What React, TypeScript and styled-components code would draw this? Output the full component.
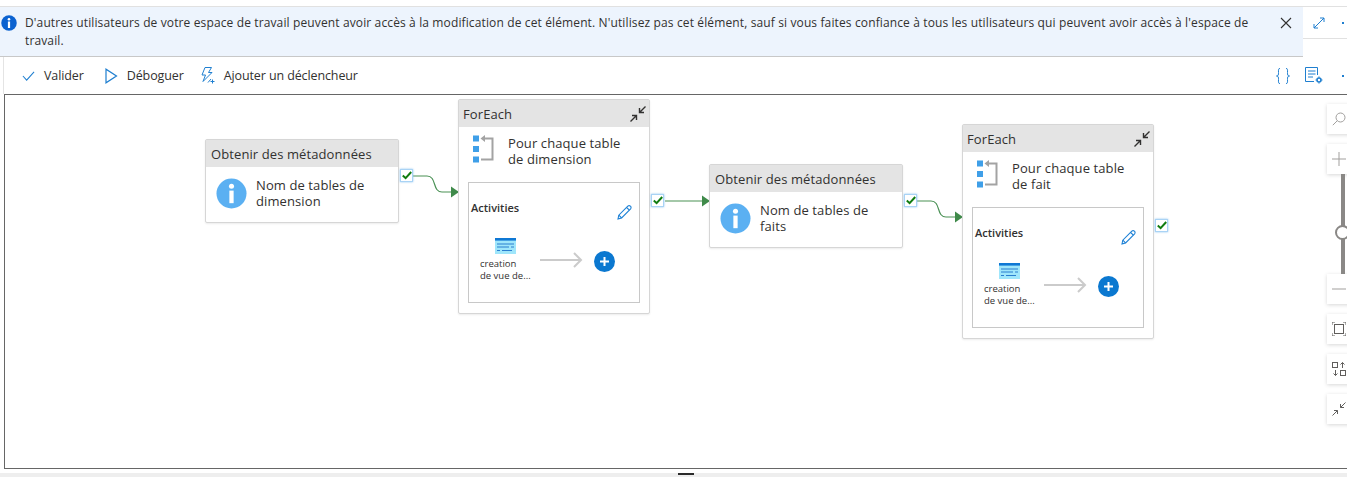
import styled, { createGlobalStyle } from "styled-components";

const GlobalStyle = createGlobalStyle`
  html, body {
    margin: 0;
    padding: 0;
    height: 100%;
    overflow: hidden;
    background: #fff;
    font-family: "Open Sans", "Noto Sans", "Liberation Sans", sans-serif;
    color: #323130;
  }
`;

interface NodeProps {
  $x: number;
  $y: number;
}

const InfoGlyph = ({ size, fill }: { size: number; fill: string }) => (
  <svg width={size} height={size} viewBox="0 0 32 32">
    <circle cx="16" cy="16" r="15.5" fill={fill} />
    <circle cx="16" cy="8.5" r="2.6" fill="#fff" />
    <rect x="13.8" y="13" width="4.4" height="13" fill="#fff" />
  </svg>
);

const CollapseIcon = () => (
  <svg width="18" height="18" viewBox="0 0 18 18" fill="none" stroke="#323130" strokeWidth="1.4">
    <path d="M1.5 16.5 7.5 10.5M3 10.5H7.5V15" />
    <path d="M16.5 1.5 10.5 7.5M15 7.5H10.5V3" />
  </svg>
);

const ForEachIcon = () => (
  <svg width="24" height="28" viewBox="0 0 24 28">
    <rect x="0" y="0.5" width="6" height="6" fill="#3f9fe8" />
    <rect x="0" y="11" width="6" height="6" fill="#3f9fe8" />
    <rect x="0" y="21.5" width="6" height="6" fill="#3f9fe8" />
    <path d="M10 3.5H19.5V24.500H8" fill="none" stroke="#a3a3a3" strokeWidth="2" />
    <path d="M12 0V7L7.5 3.5Z" fill="#a3a3a3" />
  </svg>
);

const PencilIcon = () => (
  <svg width="15" height="15" viewBox="0 0 15 15" fill="none" stroke="#1f82d6" strokeWidth="1.1">
    <path d="M1 14 1.8 10.2 10.8 1.2C11.6.5 12.6.5 13.4 1.2 14.2 2 14.2 3 13.6 3.8L4.6 12.9Z" />
    <path d="M9.6 2.5 12.4 5.2M1.8 10.2 4.6 12.9" />
  </svg>
);

const ViewIcon = () => (
  <svg width="21" height="16" viewBox="0 0 21 16">
    <rect width="21" height="16" fill="#9fe6fb" />
    <rect width="21" height="2.6" fill="#0f78d4" />
    <path d="M2 6H19M2 9H14M16 9H19M2 12.5H5M7 12.5H17" stroke="#2a7fd0" strokeWidth="1.2" />
  </svg>
);

const RunArrow = () => (
  <svg width="44" height="16" viewBox="0 0 44 16" fill="none" stroke="#cbcbcb" strokeWidth="2">
    <path d="M1 8H42M35 1 42 8 35 15" />
  </svg>
);

const Canvas = styled.main`
  position: relative;
  flex: 1;
  margin-left: 4px;
  border-top: 1px solid #666;
  border-left: 1px solid #666;
  border-bottom: 1px solid #666;
  overflow: hidden;
`;

const Page = styled.div`
  display: flex;
  flex-direction: column;
  width: 1347px;
  height: 477px;
  padding-top: 6px;
  box-sizing: border-box;
  overflow: hidden;
`;

const TopRow = styled.div`
  display: flex;
  height: 51px;
  flex: none;
  border-top: 1px solid #e1e1e1;
  box-sizing: border-box;
`;

const Banner = styled.div`
  display: flex;
  width: 1303px;
  box-sizing: border-box;
  background: #edf4fd;
  border-bottom: 1px solid #c8c8c8;
`;

const BannerIcon = styled.div`
  flex: none;
  width: 25px;
  padding: 7px 0 0 1px;
  box-sizing: border-box;
`;

const BannerText = styled.p`
  margin: 7px 0 0;
  width: 1240px;
  font-size: 12px;
  line-height: 18px;
  letter-spacing: 0.127px;
`;

const CloseButton = styled.button`
  border: 0;
  background: none;
  padding: 0;
  margin: 10px 0 0 15px;
  width: 12px;
  height: 12px;
  display: flex;
`;

const SidePane = styled.div`
  flex: 1;
  height: 32px;
  display: flex;
  align-items: center;
  justify-content: space-between;
  padding: 0 3px 0 10px;
  border-bottom: 1px solid #e1e1e1;
  box-sizing: border-box;
`;

const BlueDot = styled.span`
  width: 2px;
  height: 2px;
  background: #1f7fd0;
`;

const Toolbar = styled.div`
  display: flex;
  align-items: center;
  height: 37px;
  flex: none;
  margin-left: 3px;
  padding-left: 18px;
  border-left: 1px solid #e4e4e4;
  box-sizing: border-box;
`;

const ToolButton = styled.button<{ $after: number }>`
  display: flex;
  align-items: center;
  gap: 9px;
  border: 0;
  background: none;
  padding: 0;
  margin-right: ${(p) => p.$after}px;
  font: inherit;
  font-size: 12.5px;
  letter-spacing: -0.11px;
  color: #323130;
`;

const ToolRight = styled.div`
  margin-left: auto;
  display: flex;
  align-items: center;
  gap: 15px;
  padding-right: 3px;
`;

const ToolDot = styled(BlueDot)`
  margin-left: 4px;
`;

const Activity = styled.div<NodeProps>`
  position: absolute;
  left: ${(p) => p.$x}px;
  top: ${(p) => p.$y}px;
  width: 194px;
  height: 84px;
  box-sizing: border-box;
  background: #fff;
  border: 1px solid #d6d6d6;
  border-radius: 2px;
  box-shadow: 0 1px 2px rgba(0, 0, 0, 0.08);
`;

const NodeHeader = styled.div<{ $inset: number }>`
  display: flex;
  align-items: center;
  justify-content: space-between;
  height: 27px;
  padding: 0 2px 0 ${(p) => p.$inset}px;
  box-sizing: border-box;
  background: #e4e4e4;
  font-size: 13px;
  letter-spacing: 0.1px;
`;

const ActivityBody = styled.div`
  display: flex;
  align-items: center;
  gap: 9px;
  padding: 10px 10px 0 10px;
`;

const NodeLabel = styled.div`
  font-size: 13px;
  line-height: 16px;
  letter-spacing: 0.1px;
  color: #323130;
`;

const Container = styled.div<NodeProps>`
  position: absolute;
  left: ${(p) => p.$x}px;
  top: ${(p) => p.$y}px;
  width: 192px;
  height: 215px;
  box-sizing: border-box;
  background: #fff;
  border: 1px solid #d6d6d6;
  border-radius: 2px;
  box-shadow: 0 1px 2px rgba(0, 0, 0, 0.08);
`;

const ContainerTitle = styled.div`
  display: flex;
  align-items: flex-start;
  gap: 11px;
  height: 55px;
  padding: 8px 0 0 14px;
  box-sizing: border-box;
`;

const InnerBox = styled.div`
  margin: 0 9px;
  height: 121px;
  box-sizing: border-box;
  border: 1px solid #c8c8c8;
  padding: 17px 2px 0;
`;

const InnerHeader = styled.div`
  display: flex;
  justify-content: space-between;
  align-items: flex-start;
  padding-right: 5px;
  font-size: 11px;
  font-weight: 600;
  letter-spacing: 0;
  line-height: 16px;
`;

const PencilSlot = styled.span`
  margin-top: 5px;
`;

const InnerRow = styled.div`
  display: flex;
  margin-top: 14px;
`;

const InnerActivity = styled.div`
  width: 68px;
  padding-left: 9px;
  box-sizing: border-box;
  font-size: 9.5px;
  line-height: 12px;
`;

const ViewSlot = styled.div`
  display: flex;
  padding: 0 0 4px 15px;
`;

const ArrowSlot = styled.div`
  display: flex;
  align-items: center;
  margin-top: 7px;
  height: 30px;
`;

const AddButton = styled.button`
  position: relative;
  flex: none;
  width: 21px;
  height: 21px;
  margin: 13px 0 0 11px;
  padding: 0;
  border: 0;
  border-radius: 50%;
  background: #0b78d0;
  display: flex;
  align-items: center;
  justify-content: center;
`;

const CheckBadge = styled.div<NodeProps>`
  position: absolute;
  left: ${(p) => p.$x}px;
  top: ${(p) => p.$y}px;
  width: 13px;
  height: 13px;
  box-sizing: border-box;
  background: #fff;
  border: 1px solid #a9d3f5;
  box-shadow: 0 0 2px #8cc4f0;
  display: flex;
  align-items: center;
  justify-content: center;
`;

const Links = styled.svg`
  position: absolute;
  left: 0;
  top: 0;
  pointer-events: none;
`;

const ZoomPanel = styled.div`
  position: absolute;
  left: 1322px;
  top: 9px;
  width: 40px;
  display: flex;
  flex-direction: column;
`;

const ZoomButton = styled.div<{ $gap?: number }>`
  flex: none;
  height: 30px;
  margin-top: ${(p) => p.$gap ?? 0}px;
  padding-left: 5px;
  display: flex;
  align-items: center;
  background: #fff;
  box-shadow: 0 1px 4px rgba(0, 0, 0, 0.16);
`;

const SliderTrack = styled.div`
  position: relative;
  flex: none;
  height: 100px;
  width: 4px;
  margin-left: 14px;
  background: #8a8886;
`;

const SliderThumb = styled.div`
  position: absolute;
  left: -6px;
  top: 51px;
  width: 15px;
  height: 15px;
  box-sizing: border-box;
  border: 2px solid #8a8886;
  border-radius: 50%;
  background: #fff;
`;

const BottomStrip = styled.div`
  flex: none;
  height: 4px;
  margin-top: 4px;
  background: #eee;
  display: flex;
  justify-content: center;
`;

const Handle = styled.div`
  width: 16px;
  height: 2px;
  margin-left: 25px;
  background: #2b2b2b;
`;

const Check = () => (
  <svg width="10" height="9" viewBox="0 0 10 9" fill="none" stroke="#107c10" strokeWidth="2">
    <path d="M.8 4.6 3.6 7.2 9.2 1" />
  </svg>
);

const ActivityNode = ({ x, y, label }: { x: number; y: number; label: string[] }) => (
  <Activity $x={x} $y={y}>
    <NodeHeader $inset={5}>Obtenir des métadonnées</NodeHeader>
    <ActivityBody>
      <InfoGlyph size={31} fill="#5bb0f2" />
      <NodeLabel>
        {label[0]}
        <br />
        {label[1]}
      </NodeLabel>
    </ActivityBody>
  </Activity>
);

const ForEachNode = ({ x, y, label }: { x: number; y: number; label: string[] }) => (
  <Container $x={x} $y={y}>
    <NodeHeader $inset={4}>
      ForEach
      <CollapseIcon />
    </NodeHeader>
    <ContainerTitle>
      <ForEachIcon />
      <NodeLabel>
        {label[0]}
        <br />
        {label[1]}
      </NodeLabel>
    </ContainerTitle>
    <InnerBox>
      <InnerHeader>
        Activities
        <PencilSlot>
          <PencilIcon />
        </PencilSlot>
      </InnerHeader>
      <InnerRow>
        <InnerActivity>
          <ViewSlot>
            <ViewIcon />
          </ViewSlot>
          creation
          <br />
          de vue de...
        </InnerActivity>
        <ArrowSlot>
          <RunArrow />
        </ArrowSlot>
        <AddButton>
          <svg width="9" height="9" viewBox="0 0 9 9" stroke="#fff" strokeWidth="2">
            <path d="M4.5 0V9M0 4.5H9" />
          </svg>
        </AddButton>
      </InnerRow>
    </InnerBox>
  </Container>
);

export default function App() {
  return (
    <Page>
      <GlobalStyle />
      <TopRow>
        <Banner>
          <BannerIcon>
            <InfoGlyph size={16} fill="#0b62d0" />
          </BannerIcon>
          <BannerText>
            D'autres utilisateurs de votre espace de travail peuvent avoir accès à la modification de cet élément. N'utilisez pas cet élément, sauf si vous faites confiance à tous les utilisateurs qui peuvent avoir accès à l'espace de travail.
          </BannerText>
          <CloseButton aria-label="Fermer">
            <svg width="12" height="12" viewBox="0 0 12 12" stroke="#323130" strokeWidth="1.1">
              <path d="M1 1 11 11M11 1 1 11" />
            </svg>
          </CloseButton>
        </Banner>
        <SidePane>
          <svg width="12" height="12" viewBox="0 0 12 12" fill="none" stroke="#1f7fd0" strokeWidth="1">
            <path d="M1 11 11 1M1 7V11H5M7 1H11V5" />
          </svg>
          <BlueDot />
        </SidePane>
      </TopRow>
      <Toolbar>
        <ToolButton $after={20}>
          <svg width="13" height="12" viewBox="0 0 14 12" fill="none" stroke="#1f7fd0" strokeWidth="1.1">
            <path d="M1 6 5 10.5 13 1.5" />
          </svg>
          Valider
        </ToolButton>
        <ToolButton $after={15}>
          <svg width="14" height="16" viewBox="0 0 14 16" fill="none" stroke="#1f7fd0" strokeWidth="1.2">
            <path d="M2 1.2V14.8L12.5 8Z" />
          </svg>
          Déboguer
        </ToolButton>
        <ToolButton $after={0}>
          <svg width="16" height="17" viewBox="0 0 16 17" fill="none" stroke="#1f7fd0" strokeWidth="1">
            <path d="M6 .5H12.500L9.500 5.500H13L4 14.500 6.500 8H3Z" />
            <path d="M9 15.500 12 12M13.500 12.500V16.500M11.500 14.500H15.500" />
          </svg>
          Ajouter un déclencheur
        </ToolButton>
        <ToolRight>
          <svg width="14" height="16" viewBox="0 0 14 16" fill="none" stroke="#1f7fd0" strokeWidth="1">
            <path d="M4 .5C2 .5 2.500 2 2.500 4.500 2.500 6.500 2.500 8 .5 8 2.500 8 2.500 9.500 2.500 11.500 2.500 14 2 15.500 4 15.500" />
            <path d="M10 .5C12 .5 11.500 2 11.500 4.500 11.500 6.500 11.500 8 13.500 8 11.500 8 11.500 9.500 11.500 11.500 11.500 14 12 15.500 10 15.500" />
          </svg>
          <svg width="18" height="17" viewBox="0 0 18 17" fill="none" stroke="#1f7fd0" strokeWidth="1">
            <path d="M9 14.500H.5V.5H12.500V8" />
            <path d="M3 4H10.500M3 7H10.500M3 10H8" />
            <circle cx="14" cy="13" r="2" strokeWidth="1.6" />
            <path d="M14 9.500V10.500M14 15.500V16.500M10.500 13H11.500M16.500 13H17.500" strokeWidth="1.2" />
          </svg>
          <ToolDot />
        </ToolRight>
      </Toolbar>
      <Canvas>
        <Links width="1342" height="373" fill="none">
          <path d="M408 81H422C432 81 427 97 437 97H446" stroke="#4a9155" strokeWidth="1.2" />
          <path d="M446 91.500 454 97 446 102.500Z" fill="#3f8a4a" />
          <path d="M660 106H697" stroke="#4a9155" strokeWidth="1.2" />
          <path d="M697 100.500 705 106 697 111.500Z" fill="#3f8a4a" />
          <path d="M912 106H926C936 106 931 122 941 122H950" stroke="#4a9155" strokeWidth="1.2" />
          <path d="M950 116.500 958 122 950 127.500Z" fill="#3f8a4a" />
        </Links>
        <ActivityNode x={200} y={44} label={["Nom de tables de", "dimension"]} />
        <CheckBadge $x={395} $y={74}>
          <Check />
        </CheckBadge>
        <ForEachNode x={453} y={4} label={["Pour chaque table", "de dimension"]} />
        <CheckBadge $x={646} $y={99}>
          <Check />
        </CheckBadge>
        <ActivityNode x={704} y={69} label={["Nom de tables de", "faits"]} />
        <CheckBadge $x={899} $y={99}>
          <Check />
        </CheckBadge>
        <ForEachNode x={957} y={29} label={["Pour chaque table", "de fait"]} />
        <CheckBadge $x={1150} $y={124}>
          <Check />
        </CheckBadge>
        <ZoomPanel>
          <ZoomButton>
            <svg width="14" height="14" viewBox="0 0 14 14" fill="none" stroke="#a19f9d" strokeWidth="1">
              <circle cx="8.500" cy="5.500" r="4.500" />
              <path d="M5.300 8.700.800 13.200" />
            </svg>
          </ZoomButton>
          <ZoomButton $gap={10}>
            <svg width="14" height="14" viewBox="0 0 14 14" stroke="#a19f9d" strokeWidth="1">
              <path d="M7 0V14M0 7H14" />
            </svg>
          </ZoomButton>
          <SliderTrack>
            <SliderThumb />
          </SliderTrack>
          <ZoomButton>
            <svg width="14" height="14" viewBox="0 0 14 14" stroke="#a19f9d" strokeWidth="1">
              <path d="M0 7H14" />
            </svg>
          </ZoomButton>
          <ZoomButton $gap={10}>
            <svg width="14" height="14" viewBox="0 0 14 14" fill="none" stroke="#605e5c" strokeWidth="1">
              <rect x="2.500" y="2.500" width="9" height="9" />
              <path d="M0 3V0H3M11 0H14V3M14 11V14H11M3 14H0V11" />
            </svg>
          </ZoomButton>
          <ZoomButton $gap={10}>
            <svg width="14" height="14" viewBox="0 0 14 14" fill="none" stroke="#605e5c" strokeWidth="1">
              <rect x=".500" y=".500" width="5" height="5" />
              <rect x="8.500" y="8.500" width="5" height="5" />
              <path d="M10.500 6V.500M8.500 2.500 10.500 .500 12.500 2.500M3.500 8V13.500M1.500 11.500 3.500 13.500 5.500 11.500" />
            </svg>
          </ZoomButton>
          <ZoomButton $gap={10}>
            <svg width="14" height="14" viewBox="0 0 14 14" fill="none" stroke="#605e5c" strokeWidth="1">
              <path d="M.500 13.500 5.500 8.500M2 8.500H5.500V12" />
              <path d="M13.500 .500 8.500 5.500M12 5.500H8.500V2" />
            </svg>
          </ZoomButton>
        </ZoomPanel>
      </Canvas>
      <BottomStrip>
        <Handle />
      </BottomStrip>
    </Page>
  );
}
